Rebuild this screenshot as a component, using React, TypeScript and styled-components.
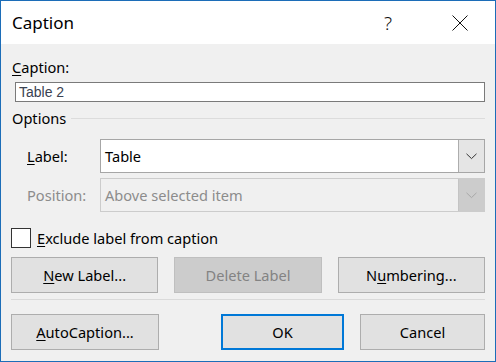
import styled, { createGlobalStyle } from "styled-components";

const GlobalStyle = createGlobalStyle`
  html, body {
    margin: 0;
    padding: 0;
    background: #f0f0f0;
  }
  * {
    box-sizing: border-box;
  }
`;

const Window = styled.div`
  width: 496px;
  height: 362px;
  border: 1px solid #1c6db8;
  background: #f0f0f0;
  display: flex;
  flex-direction: column;
  font-family: "Noto Sans", "Open Sans", sans-serif;
  font-size: 14.6px;
  color: #000;
`;

const TitleBar = styled.div`
  height: 43px;
  background: #fff;
  display: flex;
  align-items: center;
  padding: 0 12px 0 11px;
  flex-shrink: 0;
`;

const Title = styled.div`
  flex: 1;
  font-size: 17px;
`;

const TitleButton = styled.div`
  width: 46px;
  height: 100%;
  display: flex;
  align-items: center;
  justify-content: center;
  font-size: 19px;
  font-weight: 300;
  color: #111;
  & + & {
    margin-left: 26px;
  }
`;

const Content = styled.div`
  flex: 1;
  display: flex;
  flex-direction: column;
  padding: 14px 10px 0 10px;
`;

const Key = styled.span`
  text-decoration: underline;
  text-underline-offset: 2px;
  text-decoration-thickness: 1px;
`;

const FieldLabel = styled.div`
  line-height: 18px;
  padding-left: 1px;
`;

const TextInput = styled.div`
  margin: 6px 0 0 4px;
  height: 20px;
  border: 1px solid #7a7a7a;
  background: #fff;
  font-family: "Liberation Sans", Arial, sans-serif;
  font-size: 14px;
  color: #3a4251;
  padding-left: 3px;
  display: flex;
  align-items: center;
`;

const GroupHeader = styled.div`
  margin-top: 7px;
  display: flex;
  align-items: center;
  line-height: 18px;
  padding-left: 1px;

  &::after {
    content: "";
    flex: 1;
    height: 1px;
    background: #dcdcdc;
    margin-left: 5px;
  }
`;

const FormRow = styled.div<{ $top: number }>`
  display: flex;
  align-items: center;
  margin-top: ${(p) => p.$top}px;
`;

const RowLabel = styled.div<{ $disabled?: boolean }>`
  width: 89px;
  padding-left: 16px;
  color: ${(p) => (p.$disabled ? "#8c8c8c" : "#000")};
`;

const Combo = styled.div<{ $disabled?: boolean }>`
  flex: 1;
  height: 34px;
  display: flex;
  border: 1px solid ${(p) => (p.$disabled ? "#cccccc" : "#a6a6a6")};
  background: ${(p) => (p.$disabled ? "#f0f0f0" : "#fff")};
  color: ${(p) => (p.$disabled ? "#8c8c8c" : "#000")};
`;

const ComboText = styled.div`
  flex: 1;
  display: flex;
  align-items: center;
  padding-left: 4px;
`;

const ComboButton = styled.div<{ $disabled?: boolean }>`
  width: 26px;
  display: flex;
  align-items: center;
  justify-content: center;
  background: ${(p) => (p.$disabled ? "#cccccc" : "#e5e5e5")};
  border-left: 1px solid ${(p) => (p.$disabled ? "#c4c4c4" : "#adadad")};
`;

const CheckRow = styled.label`
  display: flex;
  align-items: center;
  gap: 6px;
  margin-top: 16px;
`;

const CheckBox = styled.span`
  width: 20px;
  height: 20px;
  border: 1px solid #333;
  background: #fff;
`;

const ButtonRow = styled.div<{ $top: number }>`
  display: flex;
  gap: 16px;
  margin-top: ${(p) => p.$top}px;
`;

const Button = styled.div<{ $width?: number; $disabled?: boolean; $default?: boolean }>`
  ${(p) => (p.$width ? `width: ${p.$width}px;` : "flex: 1;")}
  height: 36px;
  display: flex;
  align-items: center;
  justify-content: center;
  background: ${(p) => (p.$disabled ? "#cccccc" : "#e1e1e1")};
  border: ${(p) =>
    p.$default
      ? "2px solid #0078d7"
      : `1px solid ${p.$disabled ? "#bfbfbf" : "#adadad"}`};
  color: ${(p) => (p.$disabled ? "#838383" : "#000")};
`;

const Spacer = styled.div`
  flex: 1;
`;

const Separator = styled.div`
  height: 1px;
  background: #dadada;
  margin-top: 6px;
`;

function Chevron({ color }: { color: string }) {
  return (
    <svg width="11" height="7" viewBox="0 0 11 7">
      <path d="M0.5 0.8 L5.5 5.6 L10.5 0.8" fill="none" stroke={color} strokeWidth="1" />
    </svg>
  );
}

export default function App() {
  return (
    <>
      <GlobalStyle />
      <Window>
        <TitleBar>
          <Title>Caption</Title>
          <TitleButton>?</TitleButton>
          <TitleButton>
            <svg width="16" height="16" viewBox="0 0 16 16">
              <path d="M0.5 0.5 L15.5 15.5 M15.5 0.5 L0.5 15.5" stroke="#111" strokeWidth="1" />
            </svg>
          </TitleButton>
        </TitleBar>
        <Content>
          <FieldLabel>
            <Key>C</Key>aption:
          </FieldLabel>
          <TextInput>Table 2</TextInput>
          <GroupHeader>Options</GroupHeader>
          <FormRow $top={12}>
            <RowLabel>
              <Key>L</Key>abel:
            </RowLabel>
            <Combo>
              <ComboText>Table</ComboText>
              <ComboButton>
                <Chevron color="#333" />
              </ComboButton>
            </Combo>
          </FormRow>
          <FormRow $top={5}>
            <RowLabel $disabled>Position:</RowLabel>
            <Combo $disabled>
              <ComboText>Above selected item</ComboText>
              <ComboButton $disabled>
                <Chevron color="#a8a8a8" />
              </ComboButton>
            </Combo>
          </FormRow>
          <CheckRow>
            <CheckBox />
            <span>
              <Key>E</Key>xclude label from caption
            </span>
          </CheckRow>
          <ButtonRow $top={9}>
            <Button>
              <span>
                <Key>N</Key>ew Label...
              </span>
            </Button>
            <Button $disabled>Delete Label</Button>
            <Button>
              <span>
                N<Key>u</Key>mbering...
              </span>
            </Button>
          </ButtonRow>
          <Separator />
          <ButtonRow $top={14}>
            <Button $width={148}>
              <span>
                <Key>A</Key>utoCaption...
              </span>
            </Button>
            <Spacer />
            <Button $width={123} $default>
              OK
            </Button>
            <Button $width={125}>Cancel</Button>
          </ButtonRow>
        </Content>
      </Window>
    </>
  );
}
